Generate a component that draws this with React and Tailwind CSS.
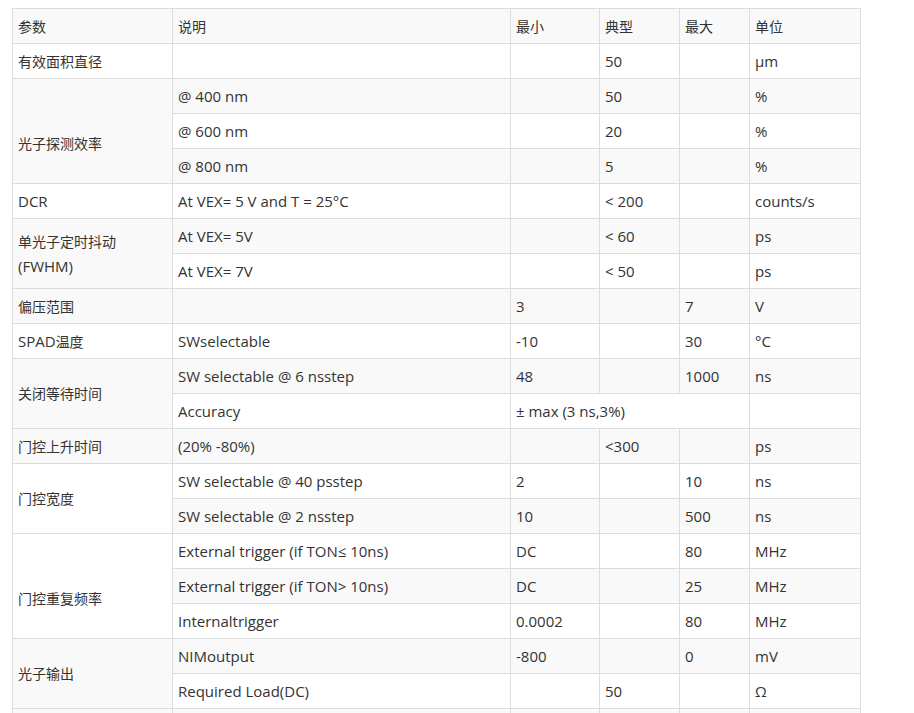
import React from "react";

const G = "bg-[#f9f9f9]";
const W = "bg-white";

const td = "border border-[#dddddd] px-[5px] h-[35px] align-middle leading-[25px] text-left font-normal";

function Txt({ s }) {
  const parts = s.split(/([\u3000-\u9fff]+)/).filter((p) => p.length);
  return parts.map((p, i) =>
    /[\u3000-\u9fff]/.test(p) ? (
      <span key={i} className="text-[14px]">{p}</span>
    ) : (
      <span key={i}>{p}</span>
    )
  );
}

function Row({ bg, children }) {
  return <tr className={bg}>{children}</tr>;
}

function C({ children, rowSpan, colSpan, low }) {
  return (
    <td className={low ? td + " pt-[24px]" : td} rowSpan={rowSpan} colSpan={colSpan}>
      {typeof children === "string" ? <Txt s={children} /> : children}
    </td>
  );
}

export default function App() {
  return (
    <div className="bg-white min-h-screen pt-[8px] pl-[12px] text-[15px] text-[#333333]" style={{ fontFamily: '"Open Sans", "Noto Sans CJK SC", sans-serif' }}>
      <table className="table-fixed border-collapse w-[848px]">
        <colgroup>
          <col className="w-[160px]" />
          <col className="w-[338px]" />
          <col className="w-[89px]" />
          <col className="w-[80px]" />
          <col className="w-[70px]" />
          <col className="w-[111px]" />
        </colgroup>
        <tbody>
          <Row bg={G}>
            <C>参数</C><C>说明</C><C>最小</C><C>典型</C><C>最大</C><C>单位</C>
          </Row>
          <Row bg={W}>
            <C>有效面积直径</C><C></C><C></C><C>50</C><C></C><C>μm</C>
          </Row>
          <Row bg={G}>
            <C rowSpan={3} low>光子探测效率</C><C>@ 400 nm</C><C></C><C>50</C><C></C><C>%</C>
          </Row>
          <Row bg={W}>
            <C>@ 600 nm</C><C></C><C>20</C><C></C><C>%</C>
          </Row>
          <Row bg={G}>
            <C>@ 800 nm</C><C></C><C>5</C><C></C><C>%</C>
          </Row>
          <Row bg={W}>
            <C>DCR</C><C>At VEX= 5 V and T = 25°C</C><C></C><C>{"< 200"}</C><C></C><C>counts/s</C>
          </Row>
          <Row bg={G}>
            <C rowSpan={2}>
              <span className="text-[14px]">单光子定时抖动</span>
              <br />
              (FWHM)
            </C>
            <C>At VEX= 5V</C><C></C><C>{"< 60"}</C><C></C><C>ps</C>
          </Row>
          <Row bg={W}>
            <C>At VEX= 7V</C><C></C><C>{"< 50"}</C><C></C><C>ps</C>
          </Row>
          <Row bg={G}>
            <C>偏压范围</C><C></C><C>3</C><C></C><C>7</C><C>V</C>
          </Row>
          <Row bg={W}>
            <C>SPAD温度</C><C>SWselectable</C><C>-10</C><C></C><C>30</C><C>°C</C>
          </Row>
          <Row bg={G}>
            <C rowSpan={2}>关闭等待时间</C><C>SW selectable @ 6 nsstep</C><C>48</C><C></C><C>1000</C><C>ns</C>
          </Row>
          <Row bg={W}>
            <C>Accuracy</C><C colSpan={3}>± max (3 ns,3%)</C><C></C>
          </Row>
          <Row bg={G}>
            <C>门控上升时间</C><C>(20% -80%)</C><C></C><C>{"<300"}</C><C></C><C>ps</C>
          </Row>
          <Row bg={W}>
            <C rowSpan={2}>门控宽度</C><C>SW selectable @ 40 psstep</C><C>2</C><C></C><C>10</C><C>ns</C>
          </Row>
          <Row bg={G}>
            <C>SW selectable @ 2 nsstep</C><C>10</C><C></C><C>500</C><C>ns</C>
          </Row>
          <Row bg={W}>
            <C rowSpan={3} low>门控重复频率</C><C>External trigger (if TON≤ 10ns)</C><C>DC</C><C></C><C>80</C><C>MHz</C>
          </Row>
          <Row bg={G}>
            <C>{"External trigger (if TON> 10ns)"}</C><C>DC</C><C></C><C>25</C><C>MHz</C>
          </Row>
          <Row bg={W}>
            <C>Internaltrigger</C><C>0.0002</C><C></C><C>80</C><C>MHz</C>
          </Row>
          <Row bg={G}>
            <C rowSpan={2}>光子输出</C><C>NIMoutput</C><C>-800</C><C></C><C>0</C><C>mV</C>
          </Row>
          <Row bg={W}>
            <C>Required Load(DC)</C><C></C><C>50</C><C></C><C>Ω</C>
          </Row>
          <Row bg={G}>
            <C></C><C></C><C></C><C></C><C></C><C></C>
          </Row>
        </tbody>
      </table>
    </div>
  );
}
